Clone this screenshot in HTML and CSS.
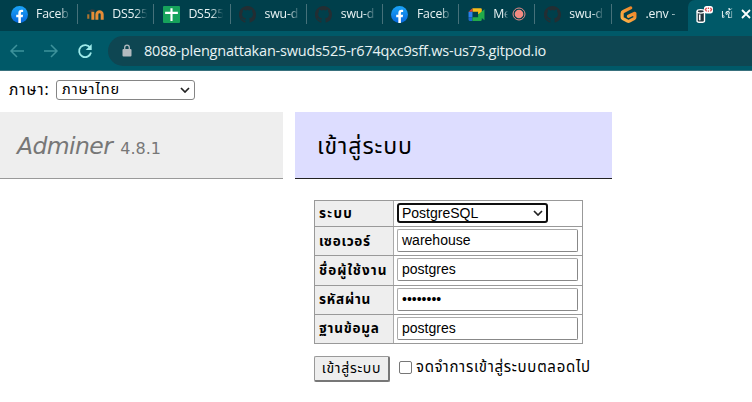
FILE: index.html
```html
<!DOCTYPE html>
<html lang="th">
<head>
<meta charset="utf-8">
<title>เข้าสู่ระบบ - Adminer</title>
<link rel="stylesheet" href="styles.css">
</head>
<body>
<svg class="defs" width="0" height="0" aria-hidden="true">
  <defs>
    <linearGradient id="blue" x1="0" y1="0" x2="0" y2="1"><stop offset="0" stop-color="#1aa5f8"/><stop offset="1" stop-color="#0767dd"/></linearGradient>
    <linearGradient id="orange" x1="0" y1="1" x2="1" y2="0"><stop offset="0" stop-color="#ffb54a"/><stop offset="1" stop-color="#ec7f24"/></linearGradient>
    <symbol id="facebook" viewBox="0 0 16 16"><circle cx="8" cy="8" r="8" fill="url(#blue)"/><path d="M6.9 16v-5.3H4.9V8.3h2V6.7c0-2.1 1.1-3.2 3-3.2.6 0 1.2.1 1.5.2v2h-.9c-.9 0-1.2.5-1.2 1.2v1.4h2.1l-.4 2.4H9.3V16z" fill="#fff"/></symbol>
    <symbol id="github" viewBox="0 0 16 16"><path fill="#232e33" d="M8 0C3.58 0 0 3.58 0 8c0 3.54 2.29 6.53 5.47 7.59.4.07.55-.17.55-.38 0-.19-.01-.82-.01-1.49-2.01.37-2.53-.49-2.69-.94-.09-.23-.48-.94-.82-1.13-.28-.15-.68-.52-.01-.53.63-.01 1.08.58 1.23.82.72 1.21 1.87.87 2.33.66.07-.52.28-.87.51-1.07-1.78-.2-3.64-.89-3.64-3.95 0-.87.31-1.59.82-2.15-.08-.2-.36-1.02.08-2.12 0 0 .67-.21 2.2.82a7.6 7.6 0 0 1 4 0c1.53-1.04 2.2-.82 2.2-.82.44 1.1.16 1.92.08 2.12.51.56.82 1.27.82 2.15 0 3.07-1.87 3.75-3.65 3.95.29.25.54.73.54 1.48 0 1.07-.01 1.93-.01 2.2 0 .21.15.46.55.38A8.01 8.01 0 0 0 16 8c0-4.42-3.58-8-8-8z"/></symbol>
  </defs>
</svg>
<header class="browser">
  <nav class="tabs">
    <div class="tab"><svg class="icon"><use href="#facebook"/></svg><span class="label">Faceb</span></div>
    <div class="tab"><svg class="icon" viewBox="0 0 16 16"><path d="M1.2 12V7.8" stroke="#ad7430" stroke-width="2"/><path d="M0 5l4.500-2 3.500.8L4 6.200z" fill="#343e41"/><path d="M5.500 13V5.500M9.300 13V8a2.500 2.500 0 0 1 5 0v5" fill="none" stroke="#e78d37" stroke-width="2.800"/></svg><span class="label">DS525</span></div>
    <div class="tab"><svg class="icon" viewBox="0 0 16 16"><rect width="16" height="16" rx="1" fill="#16a35b"/><path d="M2 6.5h12M8 2v12" stroke="#fff" stroke-width="2"/></svg><span class="label">DS525</span></div>
    <div class="tab"><svg class="icon"><use href="#github"/></svg><span class="label">swu-d</span></div>
    <div class="tab"><svg class="icon"><use href="#github"/></svg><span class="label">swu-d</span></div>
    <div class="tab"><svg class="icon"><use href="#facebook"/></svg><span class="label">Faceb</span></div>
    <div class="tab"><svg class="icon" viewBox="0 0 16 16"><path d="M4.2 2H12a1 1 0 0 1 1 1v3.5L9.5 8V5.5H4.2z" fill="#f6bd1b"/><path d="M4.2 2v3.5H.5z" fill="#e94435"/><path d="M.5 5.5h3.7v5H.5z" fill="#2c80ed"/><path d="M.5 10.500h3.700V14H1.500a1 1 0 0 1-1-1z" fill="#2068c9"/><path d="M4.200 14v-3.500h5.300V8L15.500 3v10.500L13 11.300V13a1 1 0 0 1-1 1z" fill="#22ab4a"/></svg><span class="label short">Me</span><svg class="rec" viewBox="0 0 14 14"><circle cx="7" cy="7" r="6" fill="none" stroke="#e58b88"/><circle cx="7" cy="7" r="4.300" fill="#f28b82"/></svg></div>
    <div class="tab"><svg class="icon"><use href="#github"/></svg><span class="label">swu-d</span></div>
    <div class="tab last"><svg class="icon" viewBox="0 0 16 16"><path d="M10 1.700L3.200 5.200Q2 5.800 2 7v3.500q0 .8.800 1.300l4.400 2.400q.8.400 1.600 0l4.400-2.400q.8-.5.800-1.300V6.800L8 9.700" fill="none" stroke="url(#orange)" stroke-width="3" stroke-linejoin="round" stroke-linecap="round"/></svg><span class="label">.env -</span></div>
    <div class="tab active"><svg class="icon" viewBox="0 0 16 16"><path d="M1 5v9q0 1.300 3.500 1.300T8 14V5" fill="#24343b" stroke="#fff" stroke-width="1.300"/><ellipse cx="4.500" cy="5" rx="3.500" ry="1.600" fill="#24343b" stroke="#fff" stroke-width="1.200"/><path d="M3.500 8v5.500" stroke="#fff" stroke-width="1.500"/><rect x="7.500" y="0" width="8.500" height="7" rx="2.500" fill="#fff"/><path d="M10 1.800L8.800 3.400 10 5M13.500 1.800l1.200 1.600L13.500 5M11.700 1.500v1.300M11.700 4.200v1.300" fill="none" stroke="#dc4a50" stroke-width="1.200"/></svg><span class="label thai">เข้</span><svg class="close" viewBox="0 0 10 10"><path d="M1 1l8 8M9 1L1 9" stroke="#fff" stroke-width="1.800"/></svg></div>
  </nav>
  <div class="toolbar">
    <svg class="nav" viewBox="0 0 16 16"><path d="M15 8H2M8 2L2 8l6 6" fill="none" stroke="#3d929b" stroke-width="1.500"/></svg>
    <svg class="nav" viewBox="0 0 16 16"><path d="M1 8h13M8 2l6 6-6 6" fill="none" stroke="#3d929b" stroke-width="1.500"/></svg>
    <svg class="nav" viewBox="0 0 16 16"><path d="M13.300 5A6 6 0 1 0 14 9.500" fill="none" stroke="#9deaea" stroke-width="1.800"/><path d="M14.700 1v6H8.700z" fill="#9deaea"/></svg>
    <div class="address"><svg class="lock" viewBox="0 0 10 12"><path d="M2.700 5V3a2.300 2.300 0 0 1 4.600 0v2" fill="none" stroke="#b3babf" stroke-width="1.300"/><rect x=".5" y="4.500" width="9" height="7.500" rx="1" fill="#b3babf"/></svg><span class="url">8088-plengnattakan-swuds525-r674qxc9sff.ws-us73.gitpod.io</span></div>
  </div>
</header>
<main>
  <div class="lang"><span class="lang-label">ภาษา:</span><div class="select"><span class="lang-value">ภาษาไทย</span><svg class="chevron" viewBox="0 0 10 6"><path d="M1 1l4 4 4-4" fill="none" stroke="#222" stroke-width="1.700"/></svg></div></div>
  <div class="columns">
    <h1><span class="brand">Adminer</span><span class="version">4.8.1</span></h1>
    <section class="content">
      <h2><span>เข้าสู่ระบบ</span></h2>
      <form>
        <div class="grid">
          <div class="row first"><div class="th"><span class="t1">ระบบ</span></div><div class="td"><div class="select driver"><span>PostgreSQL</span><svg class="chevron" viewBox="0 0 10 6"><path d="M1 1l4 4 4-4" fill="none" stroke="#222" stroke-width="1.700"/></svg></div></div></div>
          <div class="row"><div class="th"><span class="t2">เซอเวอร์</span></div><div class="td"><div class="input">warehouse</div></div></div>
          <div class="row"><div class="th"><span class="t3">ชื่อผู้ใช้งาน</span></div><div class="td"><div class="input">postgres</div></div></div>
          <div class="row"><div class="th"><span class="t4">รหัสผ่าน</span></div><div class="td"><div class="input password">••••••••</div></div></div>
          <div class="row"><div class="th"><span class="t5">ฐานข้อมูล</span></div><div class="td"><div class="input">postgres</div></div></div>
        </div>
        <div class="actions"><button type="button"><span>เข้าสู่ระบบ</span></button><i class="check"></i><span class="remember">จดจำการเข้าสู่ระบบตลอดไป</span></div>
      </form>
    </section>
  </div>
</main>
</body>
</html>
```
FILE: styles.css
```css
* { box-sizing: border-box; }
body { margin: 0; width: 752px; height: 402px; overflow: hidden; background: #fff; color: #000; font-family: "Noto Sans Thai", "Loma", "DejaVu Sans", sans-serif; }
svg { display: block; flex: none; }
.defs { position: absolute; }
.browser { height: 71px; background: #005968; border-bottom: 1px solid #39717d; font-family: "Open Sans", "Noto Sans", sans-serif; }
.tabs { display: flex; height: 31px; padding-left: 2px; background: #003f4b; }
.tab { display: flex; flex: none; align-items: center; width: 76.200px; height: 28px; padding-left: 8.500px; position: relative; }
.tab::after { content: ""; position: absolute; right: 0; top: 4px; width: 1px; height: 20px; background: #46717a; }
.icon { width: 17px; height: 17px; }
.label { width: 36px; margin-left: 8.500px; white-space: nowrap; font-size: 12.300px; letter-spacing: -.2px; line-height: 20px; color: #e8f3f4; -webkit-mask-image: linear-gradient(90deg, #000 65%, transparent 98%); mask-image: linear-gradient(90deg, #000 65%, transparent 98%); }
.label.short { width: 19px; -webkit-mask-image: linear-gradient(90deg, #000 55%, transparent 80%); mask-image: linear-gradient(90deg, #000 55%, transparent 80%); }
.rec { width: 14px; height: 14px; }
.last::after, .active::after { display: none; }
.active { width: 64.200px; height: 31px; padding-bottom: 3px; background: #005968; border-radius: 7px 0 0 0; }
.label.thai { width: 13px; margin-left: 8px; font-size: 12px; }
.close { width: 10px; height: 10px; margin-left: 7px; }
.toolbar { display: flex; align-items: center; height: 39px; padding-left: 9px; }
.nav { width: 16px; height: 16px; margin-right: 18px; }
.address { display: flex; align-items: center; flex: 1; height: 30px; padding-left: 14px; border-radius: 15px 0 0 15px; background: #0e4652; margin-left: -3px; }
.lock { width: 10px; height: 13px; }
.url { margin-left: 12px; color: #e8f3f4; font-size: 14.500px; letter-spacing: -.2px; line-height: 20px; white-space: nowrap; }
.lang { display: flex; align-items: center; height: 41px; padding: 0 0 3px 9px; }
.lang-label { width: 47px; font-size: 15.500px; letter-spacing: .9px; white-space: nowrap; }
.select { display: flex; align-items: center; justify-content: space-between; width: 139px; height: 20px; padding: 0 4px 0 5px; border: 1px solid #858585; border-radius: 3px; font-size: 14.500px; white-space: nowrap; }
.lang-value { letter-spacing: .9px; }
.chevron { width: 10px; height: 6px; }
.columns { display: flex; gap: 12px; align-items: flex-start; }
h1 { display: flex; align-items: baseline; width: 283px; height: 67px; margin: 0; padding: 19px 0 0 17px; background: #eee; border-bottom: 1px solid #999; color: #777; font-family: "DejaVu Sans", sans-serif; font-weight: 400; line-height: 30px; }
.brand { font-size: 23.500px; font-style: italic; letter-spacing: -.6px; }
.version { margin-left: 8px; font-size: 16px; }
.content { width: 317px; }
h2 { height: 67px; margin: 0; padding: 20px 0 0 22px; background: #ddf; border-bottom: 1px solid #222; font-size: 23px; letter-spacing: .95px; font-weight: 400; line-height: 30px; white-space: nowrap; }
form { padding: 21px 0 0 19px; }
.grid { width: 269px; border: 1px solid #999; }
.row { display: flex; height: 29.250px; border-top: 1px solid #999; }
.row.first { height: 25px; border-top: 0; }
.th { display: flex; align-items: center; width: 79px; padding: 1px 0 0 4px; background: #eee; border-right: 1px solid #aaa; font-size: 13.500px; font-weight: 700; line-height: 20px; white-space: nowrap; }
.t1 { letter-spacing: 1.300px; }
.t2 { letter-spacing: .7px; }
.t3 { letter-spacing: 1.100px; }
.t4 { letter-spacing: .8px; }
.t5 { letter-spacing: .8px; }
.td { display: flex; align-items: center; padding: 0 0 1px 3px; }
.driver { width: 151px; height: 20px; border: 2px solid #101010; padding: 0 3px 0 3px; font-family: "Liberation Sans", sans-serif; font-size: 14px; line-height: 16px; }
.input { width: 181px; height: 23px; padding: 0 0 0 4px; border: 1px solid #aaa; border-right-color: #888; border-bottom-color: #888; border-radius: 2px; font-family: "Liberation Sans", sans-serif; font-size: 14px; line-height: 21px; }
.actions { display: flex; align-items: center; height: 26px; margin-top: 12px; white-space: nowrap; }
button { width: 76px; height: 26px; padding: 0; border: 1px solid #999; border-right: 2px solid #777; border-bottom: 2px solid #777; border-radius: 2px; background: #eee; color: #000; font: 14px/20px "Noto Sans Thai", "Loma", "DejaVu Sans", sans-serif; letter-spacing: .7px; }
.check { width: 13px; height: 13px; margin: -3px 0 0 9px; border: 1px solid #777; border-radius: 2px; }
.remember { margin: -3px 0 0 4px; font-size: 15px; letter-spacing: .7px; }
```
